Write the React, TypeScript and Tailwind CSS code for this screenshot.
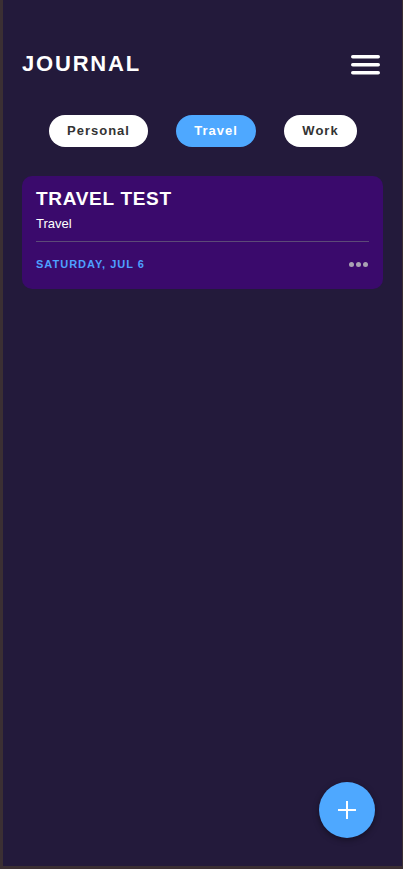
import { useState } from "react";

const categories = ["Personal", "Travel", "Work"];

function MenuIcon() {
  return (
    <svg width="29" height="20" viewBox="0 0 29 20" fill="none">
      <rect x="0" y="0" width="29" height="3.5" rx="1.75" fill="#fff" />
      <rect x="0" y="8" width="29" height="3.5" rx="1.75" fill="#fff" />
      <rect x="0" y="16" width="29" height="3.5" rx="1.75" fill="#fff" />
    </svg>
  );
}

export default function App() {
  const [active, setActive] = useState("Travel");

  return (
    <div className="h-[869px] w-[403px] bg-[#3b2f33] pl-[3px] pr-px pb-[3px] font-['Liberation_Sans',Arial,sans-serif]">
      <div className="relative h-full w-full bg-[#231a3b] overflow-hidden">
        <header className="flex items-center justify-between pl-[19px] pr-[22px] pt-[47px]">
          <h1 className="text-[22px] font-bold tracking-[1.8px] text-white">JOURNAL</h1>
          <button className="mt-[2px]">
            <MenuIcon />
          </button>
        </header>

        <div className="mt-[35px] flex justify-center gap-7 pl-[1px]">
          {categories.map((c) => (
            <button
              key={c}
              onClick={() => setActive(c)}
              className={`h-8 rounded-full px-[18px] text-[13px] font-bold tracking-[1px] ${
                active === c ? "bg-[#4ea8ff] text-white" : "bg-white text-[#333]"
              } ${c === "Personal" ? "w-[99px]" : c === "Travel" ? "w-[80px]" : "w-[73px]"}`}
            >
              {c}
            </button>
          ))}
        </div>

        <div className="mx-[19px] mt-[29px] rounded-[10px] bg-[#3a0a6c] px-[14px] pt-[12px] pb-[16px]">
          <h2 className="text-[19px] font-bold leading-[22px] tracking-[0.7px] text-white">TRAVEL TEST</h2>
          <p className="mt-[6px] text-[13px] leading-[16px] text-white">Travel</p>
          <div className="mt-[9px] h-px bg-[#5c4a78]" />
          <div className="mt-[14px] flex items-center justify-between">
            <span className="text-[11px] font-bold tracking-[1px] text-[#4ea0ff]">SATURDAY, JUL 6</span>
            <div className="mr-[1px] flex gap-[2px]">
              <span className="h-[5px] w-[5px] rounded-full bg-[#a9a3b3]" />
              <span className="h-[5px] w-[5px] rounded-full bg-[#a9a3b3]" />
              <span className="h-[5px] w-[5px] rounded-full bg-[#a9a3b3]" />
            </div>
          </div>
        </div>

        <button className="absolute left-[316px] top-[782px] flex h-[56px] w-[56px] items-center justify-center rounded-full bg-[#4ea8ff] shadow-[0_2px_6px_rgba(0,0,0,0.4)]">
          <svg width="20" height="20" viewBox="0 0 20 20">
            <path d="M10 1v18M1 10h18" stroke="#fff" strokeWidth="2" />
          </svg>
        </button>
      </div>
    </div>
  );
}
